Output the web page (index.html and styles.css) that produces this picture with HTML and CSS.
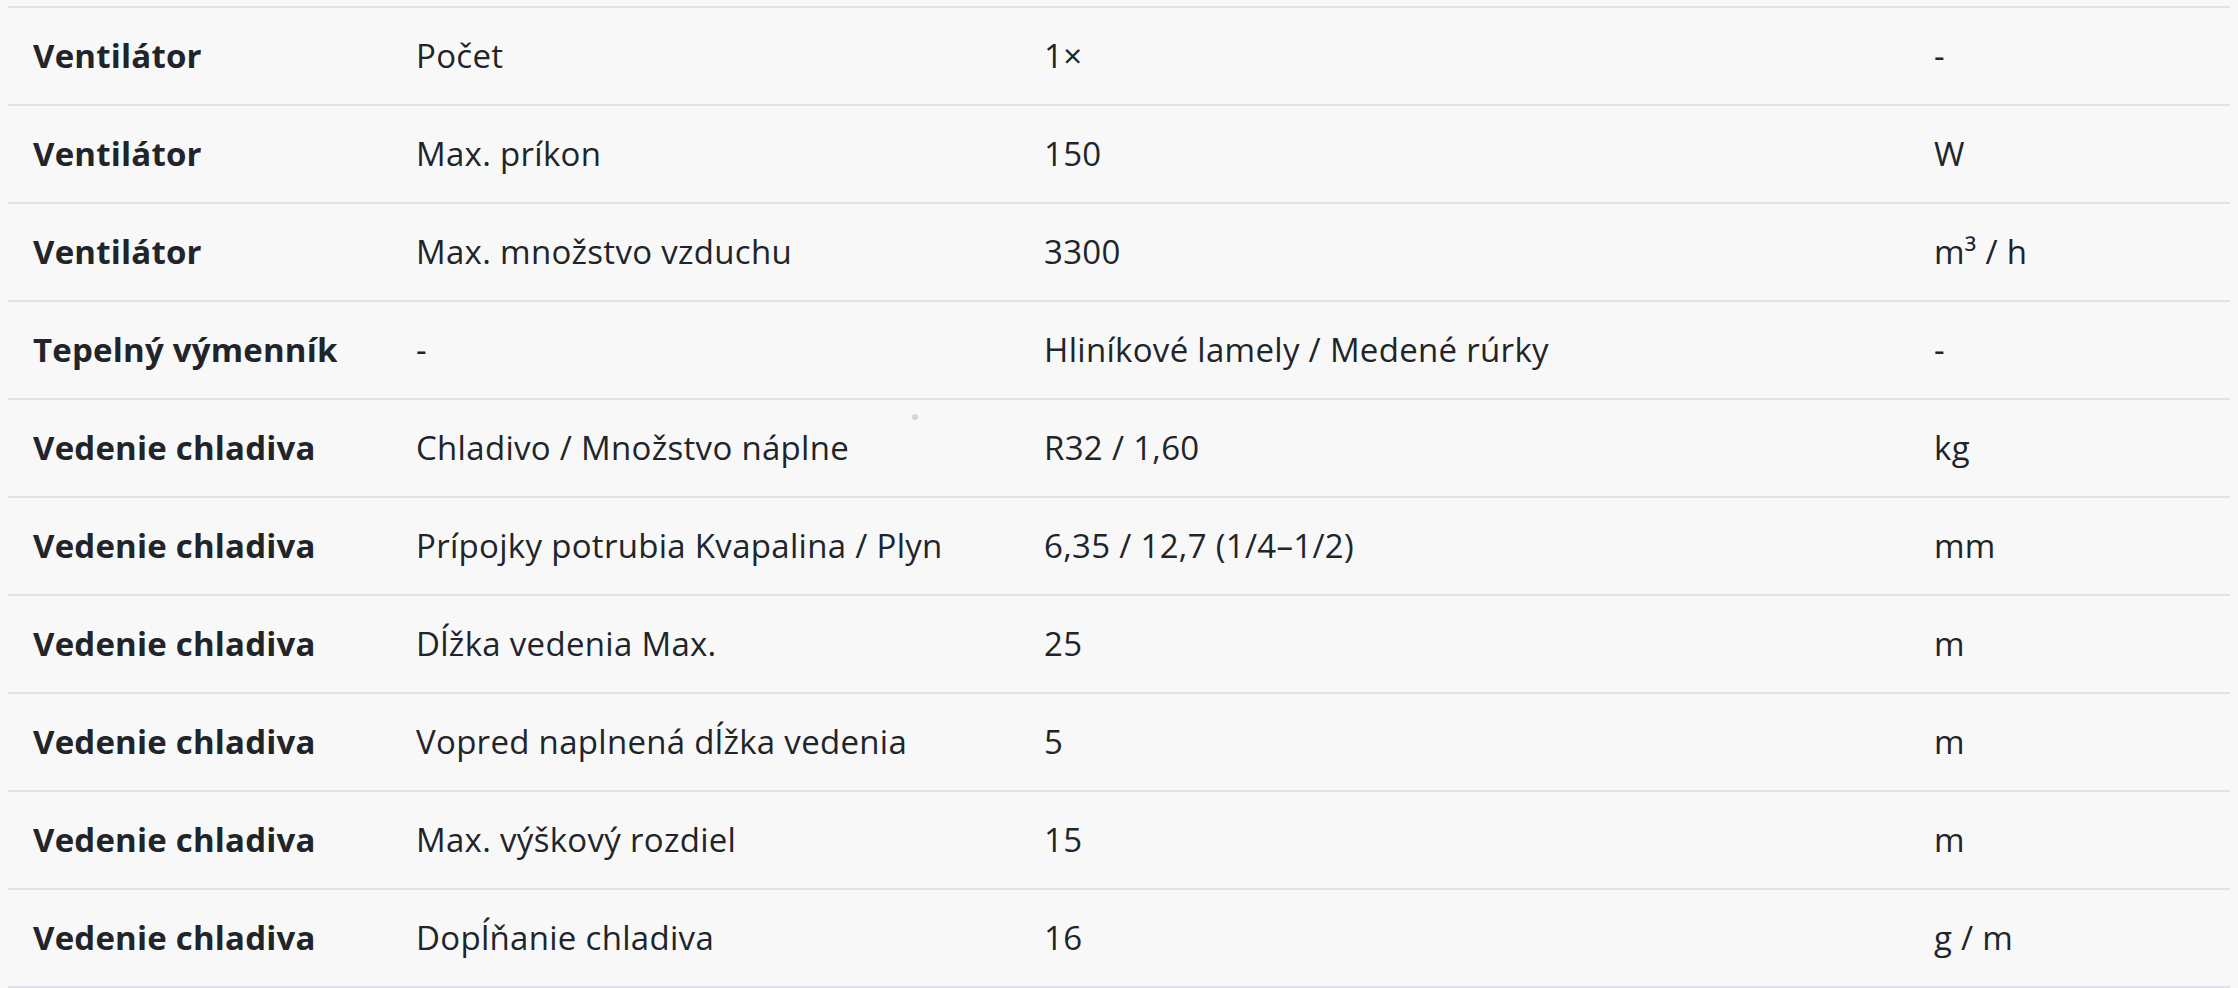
FILE: index.html
```html
<!DOCTYPE html>
<html lang="sk">
<head>
<meta charset="utf-8">
<title>Technické parametre</title>
<link rel="stylesheet" href="styles.css">
</head>
<body>
<div class="wrap">
<table class="spec">
  <colgroup>
    <col class="c-group">
    <col class="c-name">
    <col class="c-value">
    <col class="c-unit">
  </colgroup>
  <tbody>
    <tr><th>Ventilátor</th><td>Počet</td><td>1×</td><td>-</td></tr>
    <tr><th>Ventilátor</th><td>Max. príkon</td><td>150</td><td>W</td></tr>
    <tr><th>Ventilátor</th><td>Max. množstvo vzduchu</td><td>3300</td><td>m³ / h</td></tr>
    <tr><th>Tepelný výmenník</th><td>-</td><td>Hliníkové lamely / Medené rúrky</td><td>-</td></tr>
    <tr><th>Vedenie chladiva</th><td>Chladivo / Množstvo náplne</td><td>R32 / 1,60</td><td>kg</td></tr>
    <tr><th>Vedenie chladiva</th><td>Prípojky potrubia Kvapalina / Plyn</td><td>6,35 / 12,7 (1/4–1/2)</td><td>mm</td></tr>
    <tr><th>Vedenie chladiva</th><td>Dĺžka vedenia Max.</td><td>25</td><td>m</td></tr>
    <tr><th>Vedenie chladiva</th><td>Vopred naplnená dĺžka vedenia</td><td>5</td><td>m</td></tr>
    <tr><th>Vedenie chladiva</th><td>Max. výškový rozdiel</td><td>15</td><td>m</td></tr>
    <tr><th>Vedenie chladiva</th><td>Dopĺňanie chladiva</td><td>16</td><td>g / m</td></tr>
  </tbody>
</table>
<span class="cursor-dot"></span>
</div>
</body>
</html>
```
FILE: styles.css
```css
html, body {
  background: #f8f8f8;
}
body {
  margin: 6px 8px 0 8px;
  font-family: "Open Sans", "Liberation Sans", sans-serif;
  color: #212529;
}
.wrap {
  position: relative;
}
.spec {
  width: 100%;
  table-layout: fixed;
  border-collapse: separate;
  border-spacing: 0;
  border-top: 2px solid #dee2e6;
}
.c-group { width: 383px; }
.c-name { width: 628px; }
.c-value { width: 890px; }
.c-unit { width: auto; }
.spec th,
.spec td {
  padding: 24px 25px;
  line-height: 48px;
  font-size: 33px;
  text-align: left;
  vertical-align: middle;
  border-bottom: 2px solid #dee2e6;
  white-space: nowrap;
}
.spec th {
  font-weight: 700;
  letter-spacing: 0.2px;
}
.spec td {
  font-weight: 400;
  letter-spacing: 0.3px;
}
.cursor-dot {
  position: absolute;
  left: 904px;
  top: 408px;
  width: 6px;
  height: 6px;
  border-radius: 50%;
  background: #d6d6d6;
}
```
